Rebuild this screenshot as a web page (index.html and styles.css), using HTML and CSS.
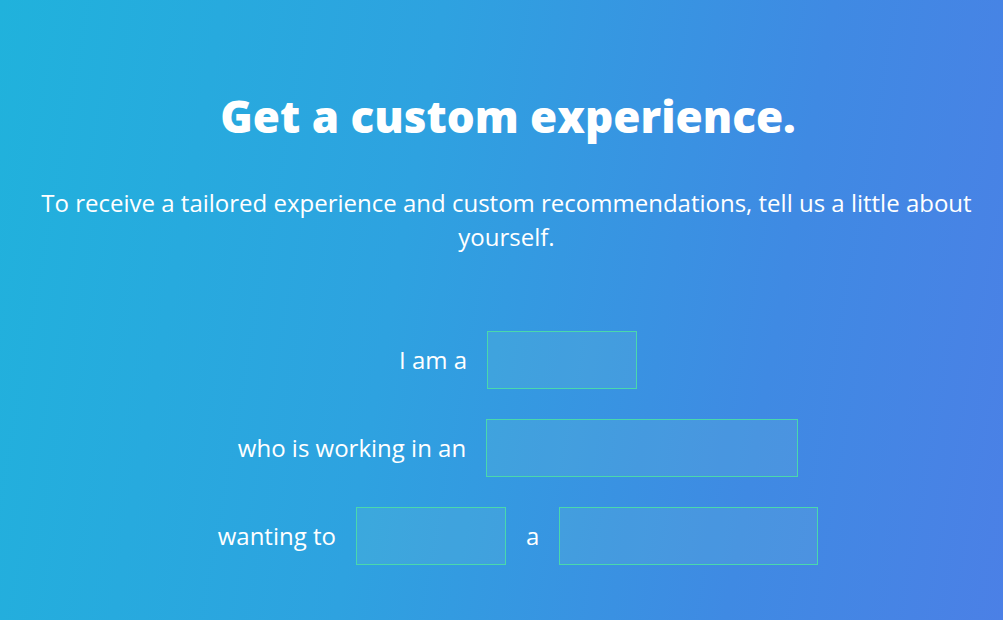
FILE: index.html
```html
<!DOCTYPE html>
<html lang="en">
<head>
<meta charset="utf-8">
<title>Get a custom experience</title>
<link rel="stylesheet" href="styles.css">
</head>
<body>
<main class="page">
  <h1 class="title">Get a custom experience.</h1>
  <p class="lead">To receive a tailored experience and custom recommendations, tell us a little about yourself.</p>
  <form class="form">
    <div class="row">
      <label class="label">I am a</label>
      <input class="field field-sm" type="text">
    </div>
    <div class="row">
      <label class="label">who is working in an</label>
      <input class="field field-lg" type="text">
    </div>
    <div class="row">
      <label class="label">wanting to</label>
      <input class="field field-sm" type="text">
      <span class="label">a</span>
      <input class="field field-md" type="text">
    </div>
  </form>
</main>
</body>
</html>
```

FILE: styles.css
```css
html, body {
  margin: 0;
  padding: 0;
  height: 100%;
}
body {
  background: linear-gradient(100deg, #20b2dc 0%, #2ea2e0 40%, #3f8ae3 75%, #4b80e6 100%);
  font-family: "Open Sans", "Liberation Sans", sans-serif;
  color: #ffffff;
  overflow: hidden;
}
.page {
  padding-top: 86px;
  text-align: center;
}
.title {
  margin: 0;
  font-size: 44px;
  font-weight: 800;
  line-height: 60px;
  padding-left: 13px;
}
.lead {
  margin: 40px 26px 0 36px;
  font-size: 24px;
  line-height: 34px;
}
.form {
  margin-top: 77px;
  display: flex;
  flex-direction: column;
  align-items: center;
  gap: 30px;
  padding-left: 33px;
}
.row {
  display: flex;
  align-items: center;
  gap: 20px;
}
.label {
  font-size: 24px;
  line-height: 30px;
}
.field {
  box-sizing: border-box;
  height: 58px;
  margin: 0;
  border: 1px solid #4ad8ac;
  background: rgba(120, 200, 210, 0.18);
  outline: none;
  padding: 0 10px;
  font: inherit;
  color: #fff;
}
.field-sm { width: 150px; }
.field-md { width: 259px; }
.field-lg { width: 312px; }
```
